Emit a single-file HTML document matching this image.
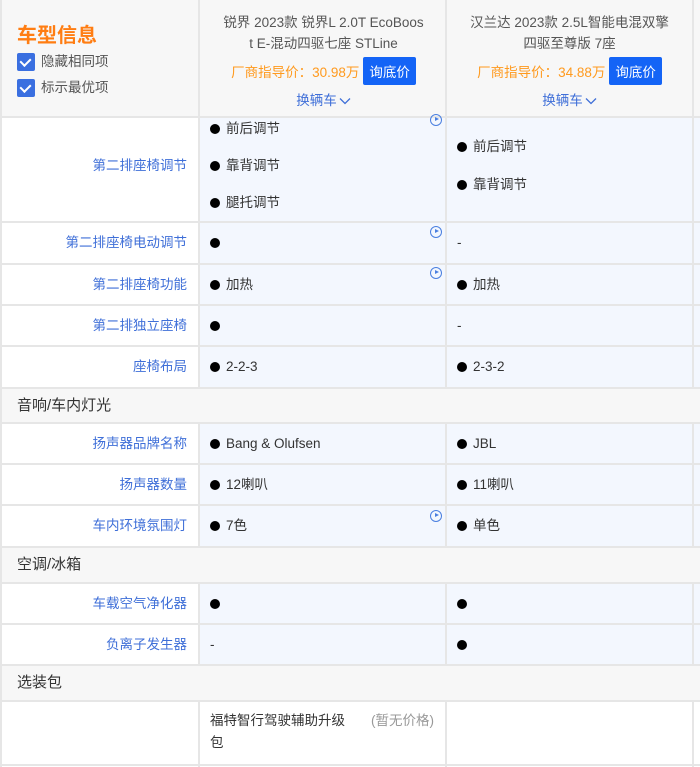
<!DOCTYPE html>
<html><head><meta charset="utf-8"><style>
*{margin:0;padding:0;box-sizing:border-box}
body{width:700px;height:767px;overflow:hidden;background:#fff;font-family:"Liberation Sans","Noto Sans CJK SC",sans-serif;font-size:13px;color:#333;position:relative}
.a{position:absolute}
.hl{position:absolute;left:2px;width:698px;height:2px;background:#e6e6e6}
.vl{position:absolute;width:2px;background:#e6e6e6}
.lab{position:absolute;left:2px;width:185px;text-align:right;color:#3f6fd8;font-size:13.5px;line-height:18px}
.cell{position:absolute;background:#f3f7fe}
.t{position:absolute;font-size:13.5px;color:#333;white-space:nowrap;line-height:18px}
.dot{display:inline-block;width:10px;height:10px;border-radius:50%;background:#000;margin-right:6px;vertical-align:-1px}
.sec{position:absolute;left:2px;width:698px;background:#f7f7f7;font-size:15px;color:#333;padding-left:15px}
.play{position:absolute;width:12px;height:12px;border:1.5px solid #4a7fe0;border-radius:50%}
.play:after{content:"";position:absolute;left:3.5px;top:2px;border-left:4px solid #4a7fe0;border-top:2.5px solid transparent;border-bottom:2.5px solid transparent}
.cb{position:absolute;left:17px;width:18px;height:18px;background:#3a6fe0;border-radius:2px}
.cb:after{content:"";position:absolute;left:5px;top:3px;width:5px;height:8px;border-right:2px solid #fff;border-bottom:2px solid #fff;transform:rotate(45deg)}
.btn{display:inline-block;background:#1464f6;color:#fff;border-radius:2px;padding:4px 6px;font-size:13.5px;margin-left:4px}
</style></head><body>
<!-- header -->
<div class="a" style="left:2px;top:0;width:698px;height:117px;background:#f7f7f7"></div>
<div class="a" style="left:17px;top:19px;font-size:20px;font-weight:bold;color:#ff7d12">车型信息</div>
<div class="cb" style="top:53px"></div><div class="t" style="left:41px;top:53px;color:#555">隐藏相同项</div>
<div class="cb" style="top:79px"></div><div class="t" style="left:41px;top:79px;color:#555">标示最优项</div>
<div class="a" style="left:202px;top:12px;width:243px;text-align:center;line-height:21px;color:#555;font-size:13.5px">锐界 2023款 锐界L 2.0T EcoBoos<br>t E-混动四驱七座 STLine</div>
<div class="a" style="left:202px;top:57px;width:243px;text-align:center;color:#ff9a1e;font-size:13.5px">厂商指导价：30.98万<span class="btn">询底价</span></div>
<div class="a" style="left:202px;top:89px;width:243px;text-align:center;color:#3f6fd8;font-size:13.5px">换辆车<svg width="12" height="8" viewBox="0 0 12 8" style="margin-left:2px"><path d="M1 1.5L6 6.5L11 1.5" fill="none" stroke="#3f6fd8" stroke-width="1.3"/></svg></div>
<div class="a" style="left:447px;top:12px;width:245px;text-align:center;line-height:21px;color:#555;font-size:13.5px">汉兰达 2023款 2.5L智能电混双擎<br>四驱至尊版 7座</div>
<div class="a" style="left:447px;top:57px;width:245px;text-align:center;color:#ff9a1e;font-size:13.5px">厂商指导价：34.88万<span class="btn">询底价</span></div>
<div class="a" style="left:447px;top:89px;width:245px;text-align:center;color:#3f6fd8;font-size:13.5px">换辆车<svg width="12" height="8" viewBox="0 0 12 8" style="margin-left:2px"><path d="M1 1.5L6 6.5L11 1.5" fill="none" stroke="#3f6fd8" stroke-width="1.3"/></svg></div>

<!-- cells bg -->
<div class="cell" style="left:200px;top:117px;width:500px;height:271px"></div>
<div class="cell" style="left:200px;top:423px;width:500px;height:124px"></div>
<div class="cell" style="left:200px;top:583px;width:500px;height:82px"></div>

<!-- sections -->
<div class="sec" style="top:388px;height:35px;line-height:35px">音响/车内灯光</div>
<div class="sec" style="top:547px;height:36px;line-height:36px">空调/冰箱</div>
<div class="sec" style="top:665px;height:36px;line-height:36px">选装包</div>

<!-- verticals -->
<div class="vl" style="left:0;top:0;height:767px"></div>
<div class="vl" style="left:198px;top:0;height:388px"></div>
<div class="vl" style="left:198px;top:423px;height:124px"></div>
<div class="vl" style="left:198px;top:583px;height:82px"></div>
<div class="vl" style="left:198px;top:701px;height:66px"></div>
<div class="vl" style="left:445px;top:0;height:388px"></div>
<div class="vl" style="left:445px;top:423px;height:124px"></div>
<div class="vl" style="left:445px;top:583px;height:82px"></div>
<div class="vl" style="left:445px;top:701px;height:66px"></div>
<div class="vl" style="left:692px;top:0;height:388px"></div>
<div class="vl" style="left:692px;top:423px;height:124px"></div>
<div class="vl" style="left:692px;top:583px;height:82px"></div>
<div class="vl" style="left:692px;top:701px;height:66px"></div>

<!-- horizontals -->
<div class="hl" style="top:116px"></div><div class="hl" style="top:221px"></div><div class="hl" style="top:263px"></div><div class="hl" style="top:304px"></div><div class="hl" style="top:345px"></div><div class="hl" style="top:387px"></div><div class="hl" style="top:422px"></div><div class="hl" style="top:463px"></div><div class="hl" style="top:504px"></div><div class="hl" style="top:546px"></div><div class="hl" style="top:582px"></div><div class="hl" style="top:623px"></div><div class="hl" style="top:664px"></div><div class="hl" style="top:700px"></div><div class="hl" style="top:764px"></div>

<!-- rows -->
<div class="lab" style="top:157px">第二排座椅调节</div>
<div class="t" style="left:210px;top:120px"><span class="dot"></span>前后调节</div>
<div class="t" style="left:210px;top:157px"><span class="dot"></span>靠背调节</div>
<div class="t" style="left:210px;top:194px"><span class="dot"></span>腿托调节</div>
<div class="t" style="left:457px;top:138px"><span class="dot"></span>前后调节</div>
<div class="t" style="left:457px;top:176px"><span class="dot"></span>靠背调节</div>
<div class="play" style="left:430px;top:114px"></div>

<div class="lab" style="top:234px">第二排座椅电动调节</div>
<div class="t" style="left:210px;top:234px"><span class="dot"></span></div>
<div class="t" style="left:457px;top:234px">-</div>
<div class="play" style="left:430px;top:226px"></div>

<div class="lab" style="top:276px">第二排座椅功能</div>
<div class="t" style="left:210px;top:276px"><span class="dot"></span>加热</div>
<div class="t" style="left:457px;top:276px"><span class="dot"></span>加热</div>
<div class="play" style="left:430px;top:267px"></div>

<div class="lab" style="top:317px">第二排独立座椅</div>
<div class="t" style="left:210px;top:317px"><span class="dot"></span></div>
<div class="t" style="left:457px;top:317px">-</div>

<div class="lab" style="top:358px">座椅布局</div>
<div class="t" style="left:210px;top:358px"><span class="dot"></span>2-2-3</div>
<div class="t" style="left:457px;top:358px"><span class="dot"></span>2-3-2</div>

<div class="lab" style="top:435px">扬声器品牌名称</div>
<div class="t" style="left:210px;top:435px"><span class="dot"></span>Bang &amp; Olufsen</div>
<div class="t" style="left:457px;top:435px"><span class="dot"></span>JBL</div>

<div class="lab" style="top:476px">扬声器数量</div>
<div class="t" style="left:210px;top:476px"><span class="dot"></span>12喇叭</div>
<div class="t" style="left:457px;top:476px"><span class="dot"></span>11喇叭</div>

<div class="lab" style="top:517px">车内环境氛围灯</div>
<div class="t" style="left:210px;top:517px"><span class="dot"></span>7色</div>
<div class="t" style="left:457px;top:517px"><span class="dot"></span>单色</div>
<div class="play" style="left:430px;top:510px"></div>

<div class="lab" style="top:595px">车载空气净化器</div>
<div class="t" style="left:210px;top:595px"><span class="dot"></span></div>
<div class="t" style="left:457px;top:595px"><span class="dot"></span></div>

<div class="lab" style="top:636px">负离子发生器</div>
<div class="t" style="left:210px;top:636px">-</div>
<div class="t" style="left:457px;top:636px"><span class="dot"></span></div>

<div class="t" style="left:210px;top:712px">福特智行驾驶辅助升级</div>
<div class="t" style="left:371px;top:712px;color:#999">(暂无价格)</div>
<div class="t" style="left:210px;top:734px">包</div>
</body></html>
